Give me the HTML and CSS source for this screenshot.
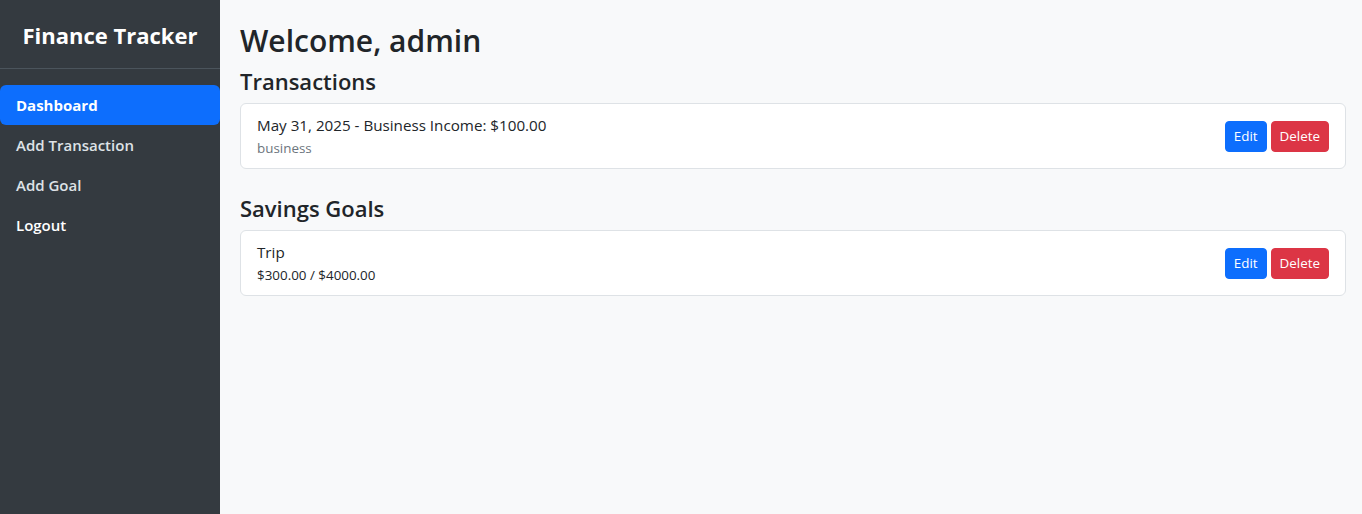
FILE: index.html
```html
<!DOCTYPE html>
<html lang="en">
<head>
<meta charset="utf-8">
<title>Finance Tracker</title>
<link rel="stylesheet" href="styles.css">
</head>
<body>
<div class="layout">
  <aside class="sidebar">
    <div class="brand">Finance Tracker</div>
    <nav class="nav">
      <a class="nav-link active" href="#">Dashboard</a>
      <a class="nav-link" href="#">Add Transaction</a>
      <a class="nav-link" href="#">Add Goal</a>
      <a class="nav-link logout" href="#">Logout</a>
    </nav>
  </aside>
  <main class="main">
    <h2 class="welcome">Welcome, admin</h2>
    <h4 class="section-title">Transactions</h4>
    <ul class="list">
      <li class="item">
        <div class="item-text">
          <div class="item-title">May 31, 2025 - Business Income: $100.00</div>
          <small class="muted">business</small>
        </div>
        <div class="actions">
          <button class="btn btn-primary">Edit</button>
          <button class="btn btn-danger">Delete</button>
        </div>
      </li>
    </ul>
    <h4 class="section-title">Savings Goals</h4>
    <ul class="list">
      <li class="item">
        <div class="item-text">
          <div class="item-title">Trip</div>
          <small class="amount">$300.00 / $4000.00</small>
        </div>
        <div class="actions">
          <button class="btn btn-primary">Edit</button>
          <button class="btn btn-danger">Delete</button>
        </div>
      </li>
    </ul>
  </main>
</div>
</body>
</html>
```
FILE: styles.css
```css
* { box-sizing: border-box; }
html, body { margin: 0; height: 100%; }
body {
  font-family: "Open Sans", "Noto Sans", sans-serif;
  font-size: 16px;
  line-height: 1.5;
  color: #212529;
  background: #f8f9fa;
}
.layout { display: flex; min-height: 100vh; }
.sidebar {
  width: 220px;
  flex: 0 0 220px;
  background: #343a40;
  color: #fff;
}
.brand {
  font-size: 22px;
  font-weight: 700;
  text-align: center;
  height: 69px;
  line-height: 70px;
  border-bottom: 1px solid #4b545c;
}
.nav { display: flex; flex-direction: column; padding-top: 16px; }
.nav-link {
  display: block;
  height: 40px;
  line-height: 40px;
  padding: 0 16px;
  font-weight: 600;
  font-size: 15px;
  color: #dee2e6;
  text-decoration: none;
  border-radius: 6px;
}
.nav-link.active { background: #0d6efd; color: #fff; font-weight: 700; }
.nav-link.logout { color: #fff; }
.main { flex: 1; padding: 23px 16px 20px 20px; }
.welcome {
  font-size: 30px;
  font-weight: 600;
  line-height: 36px;
  margin: 0 0 8px;
}
.section-title {
  font-size: 22px;
  font-weight: 600;
  line-height: 28px;
  margin: 0 0 8px;
}
.list {
  list-style: none;
  margin: 0 0 25px;
  padding: 0;
}
.item {
  display: flex;
  align-items: center;
  justify-content: space-between;
  background: #fff;
  border: 1px solid #dee2e6;
  border-radius: 6px;
  padding: 9px 16px;
}
.item-title { font-size: 15.2px; line-height: 24px; }
.muted, .amount { display: block; font-size: 13.4px; line-height: 21px; margin-top: 1px; }
.muted { color: #6c757d; }
.amount { color: #212529; }
.actions { display: flex; gap: 4px; }
.btn {
  font-family: inherit;
  font-size: 13.4px;
  line-height: 21px;
  padding: 4px 8px;
  border: 1px solid transparent;
  border-radius: 4px;
  color: #fff;
  cursor: pointer;
}
.btn-primary { background: #0d6efd; border-color: #0d6efd; }
.btn-danger { background: #dc3545; border-color: #dc3545; }
```
